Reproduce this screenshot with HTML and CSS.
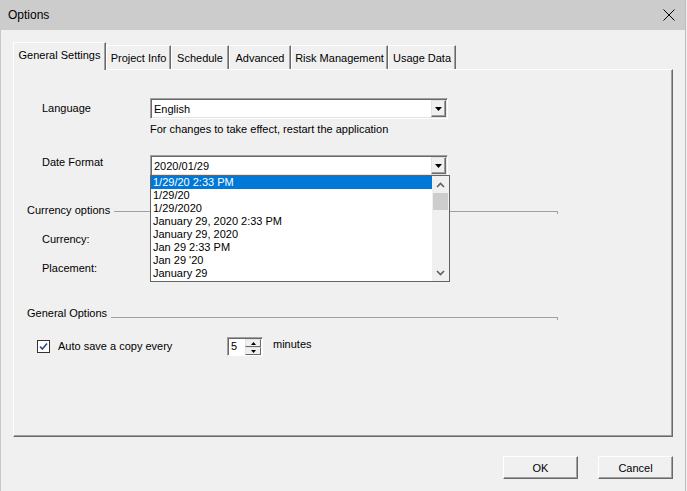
FILE: index.html
```html
<!DOCTYPE html>
<html>
<head>
<meta charset="utf-8">
<title>Options</title>
<link rel="stylesheet" href="styles.css">
</head>
<body>
<div class="window">
  <div class="titlebar">
    <span class="title">Options</span>
    <svg class="close" width="12" height="12" viewBox="0 0 12 12"><path d="M0.5 0.5 L11.5 11.5 M11.5 0.5 L0.5 11.5" stroke="#000" stroke-width="1" fill="none"/></svg>
  </div>
  <div class="client">
    <div class="tabs">
      <div class="tab tab-active tab-gs">General Settings</div>
      <div class="tab tab-pi">Project Info</div>
      <div class="tab tab-sch">Schedule</div>
      <div class="tab tab-adv">Advanced</div>
      <div class="tab tab-risk">Risk Management</div>
      <div class="tab tab-usage">Usage Data</div>
    </div>
    <div class="panel">
      <div class="field field-lang">
        <span class="label">Language</span>
        <div class="combo">
          <span class="combo-value">English</span>
          <span class="combo-btn"><svg width="7" height="4" viewBox="0 0 7 4"><path d="M0 0 H7 L3.5 4 Z" fill="#000"/></svg></span>
        </div>
      </div>
      <div class="hint">For changes to take effect, restart the application</div>
      <div class="field field-date">
        <span class="label">Date Format</span>
        <div class="combo">
          <span class="combo-value">2020/01/29</span>
          <span class="combo-btn"><svg width="7" height="4" viewBox="0 0 7 4"><path d="M0 0 H7 L3.5 4 Z" fill="#000"/></svg></span>
          <div class="dropdown">
            <div class="options">
              <div class="option option-selected">1/29/20 2:33 PM</div>
              <div class="option">1/29/20</div>
              <div class="option">1/29/2020</div>
              <div class="option">January 29, 2020 2:33 PM</div>
              <div class="option">January 29, 2020</div>
              <div class="option">Jan 29 2:33 PM</div>
              <div class="option">Jan 29 '20</div>
              <div class="option">January 29</div>
            </div>
            <div class="scrollbar">
              <div class="sb-arrow"><svg width="9" height="6" viewBox="0 0 9 6"><path d="M1 5 L4.5 1.5 L8 5" stroke="#606060" stroke-width="1.6" fill="none"/></svg></div>
              <div class="sb-thumb"></div>
              <div class="sb-track"></div>
              <div class="sb-arrow"><svg width="9" height="6" viewBox="0 0 9 6"><path d="M1 1 L4.5 4.5 L8 1" stroke="#606060" stroke-width="1.6" fill="none"/></svg></div>
            </div>
          </div>
        </div>
      </div>
      <div class="group group-currency">
        <span class="group-title">Currency options</span>
        <span class="group-line"></span>
      </div>
      <div class="field field-plain"><span class="label">Currency:</span></div>
      <div class="field field-plain"><span class="label">Placement:</span></div>
      <div class="group group-general">
        <span class="group-title">General Options</span>
        <span class="group-line"></span>
      </div>
      <div class="check-row">
        <span class="checkbox"><svg width="11" height="11" viewBox="0 0 11 11"><path d="M2 5.5 L4.3 8 L9 2.5" stroke="#2d4f80" stroke-width="1.6" fill="none"/></svg></span>
        <span class="check-label">Auto save a copy every</span>
        <div class="spin">
          <span class="spin-value">5</span>
          <div class="spin-btns">
            <span class="spin-btn"><svg width="5" height="3" viewBox="0 0 5 3"><path d="M0 3 H5 L2.5 0 Z" fill="#000"/></svg></span>
            <span class="spin-btn"><svg width="5" height="3" viewBox="0 0 5 3"><path d="M0 0 H5 L2.5 3 Z" fill="#000"/></svg></span>
          </div>
        </div>
        <span class="minutes">minutes</span>
      </div>
    </div>
    <div class="footer">
      <button class="btn">OK</button>
      <button class="btn">Cancel</button>
    </div>
  </div>
</div>
</body>
</html>
```
FILE: styles.css
```css
html, body {
  margin: 0;
  padding: 0;
  background: #f0f0f0;
}
body {
  font-family: "Liberation Sans", Arial, sans-serif;
  font-size: 11px;
  color: #000;
}
.window {
  width: 686px;
  height: 491px;
  box-sizing: border-box;
  display: flex;
  flex-direction: column;
  border-left: 1px solid #c8c8c8;
  border-right: 1px solid #bcbcbc;
  background: #f0f0f0;
}
.titlebar {
  height: 30px;
  flex: none;
  background: #cccccc;
  display: flex;
  align-items: center;
  justify-content: space-between;
  padding: 0 10px 0 8px;
  margin-left: -1px;
}
.title {
  font-size: 12px;
}
.close {
  display: block;
}
.client {
  flex: 1;
  padding: 12px 12px 0 12px;
}
.tabs {
  display: flex;
  align-items: flex-end;
  height: 27px;
}
.tab {
  height: 24px;
  box-sizing: border-box;
  border: 1px solid;
  border-color: #fff #696969 transparent #fff;
  border-bottom: none;
  box-shadow: inset -1px 0 #a0a0a0;
  padding-top: 6px;
  line-height: 13px;
  text-align: center;
  white-space: nowrap;
}
.tab-active {
  height: 28px;
  margin-bottom: -1px;
  padding-top: 6px;
  position: relative;
  z-index: 1;
  background: #f0f0f0;
}
.tab-gs { width: 93px; }
.tab-pi { width: 65px; }
.tab-sch { width: 58px; }
.tab-adv { width: 62px; }
.tab-risk { width: 97px; }
.tab-usage { width: 68px; }

.panel {
  height: 368px;
  box-sizing: border-box;
  border: 1px solid;
  border-color: #fff #696969 #696969 #fff;
  box-shadow: inset -1px -1px #a0a0a0;
  padding-left: 13px;
}
.field {
  display: flex;
  padding-left: 15px;
}
.label {
  width: 108px;
  flex: none;
  line-height: 13px;
}
.field-lang {
  margin-top: 28px;
}
.field-lang .label {
  margin-top: 4px;
}
.field-date {
  margin-top: 19px;
}
.field-date .label {
  margin-top: 1px;
}
.field-plain {
  margin-top: 16px;
}
.combo {
  width: 298px;
  height: 21px;
  box-sizing: border-box;
  position: relative;
  border: 1px solid;
  border-color: #a0a0a0 #fff #fff #a0a0a0;
  box-shadow: inset 1px 1px #696969, inset -1px -1px #e3e3e3;
  background: #fff;
  display: flex;
  align-items: center;
}
.combo-value {
  flex: 1;
  padding-left: 3px;
  padding-top: 1px;
  line-height: 13px;
}
.combo-btn {
  width: 15px;
  height: 17px;
  margin-right: 1px;
  box-sizing: border-box;
  border: 1px solid;
  border-color: #e3e3e3 #696969 #696969 #e3e3e3;
  box-shadow: inset -1px -1px #a0a0a0;
  background: #f0f0f0;
  display: flex;
  align-items: center;
  justify-content: center;
}
.combo-btn svg {
  display: block;
}
.hint {
  margin: 4px 0 0 123px;
  line-height: 13px;
}
.dropdown {
  position: absolute;
  top: 19px;
  left: -1px;
  width: 300px;
  height: 107px;
  box-sizing: border-box;
  border: 1px solid #646464;
  background: #fff;
  display: flex;
  z-index: 2;
}
.options {
  flex: 1;
}
.option {
  height: 13px;
  line-height: 13px;
  padding-left: 2px;
  white-space: nowrap;
}
.option-selected {
  background: #0078d7;
  color: #fff;
}
.scrollbar {
  width: 17px;
  background: #f0f0f0;
  display: flex;
  flex-direction: column;
}
.sb-arrow {
  height: 17px;
  display: flex;
  align-items: center;
  justify-content: center;
}
.sb-arrow svg {
  display: block;
}
.sb-thumb {
  height: 17px;
  margin: 0 1px;
  background: #cdcdcd;
}
.sb-track {
  flex: 1;
}
.group {
  display: flex;
  width: 531px;
  align-items: flex-start;
}
.group-currency {
  margin-top: 28px;
}
.group-general {
  margin-top: 32px;
}
.group-title {
  line-height: 13px;
}
.group-line {
  flex: 1;
  height: 2px;
  margin-left: 4px;
  border-top: 1px solid #a0a0a0;
  border-right: 1px solid #a0a0a0;
}
.group-currency .group-line {
  margin-top: 7px;
}
.group-general .group-line {
  margin-top: 10px;
}
.check-row {
  display: flex;
  align-items: center;
  height: 19px;
  margin-top: 17px;
  padding-left: 10px;
}
.checkbox {
  width: 13px;
  height: 13px;
  box-sizing: border-box;
  border: 1px solid #333;
  background: #fff;
  display: flex;
  align-items: center;
  justify-content: center;
  margin-right: 8px;
}
.checkbox svg {
  display: block;
}
.check-label {
  width: 169px;
  line-height: 13px;
}
.spin {
  width: 36px;
  height: 19px;
  box-sizing: border-box;
  border: 1px solid;
  border-color: #a0a0a0 #fff #fff #a0a0a0;
  box-shadow: inset 1px 1px #696969;
  background: #fff;
  display: flex;
}
.spin-value {
  flex: 1;
  padding-left: 3px;
  line-height: 17px;
}
.spin-btns {
  width: 16px;
  display: flex;
  flex-direction: column;
  padding: 1px 1px 0 0;
}
.spin-btn {
  flex: 1;
  box-sizing: border-box;
  border: 1px solid;
  border-color: #e3e3e3 #696969 #696969 #e3e3e3;
  background: #f0f0f0;
  display: flex;
  align-items: center;
  justify-content: center;
}
.spin-btn svg {
  display: block;
}
.minutes {
  align-self: flex-start;
  margin: 1px 0 0 10px;
  line-height: 13px;
}
.footer {
  display: flex;
  justify-content: flex-end;
  gap: 20px;
  margin-top: 19px;
}
.btn {
  width: 75px;
  height: 23px;
  box-sizing: border-box;
  border: 1px solid;
  border-color: #fff #696969 #696969 #fff;
  box-shadow: inset -1px -1px #a0a0a0;
  background: #f0f0f0;
  font-family: "Liberation Sans", Arial, sans-serif;
  font-size: 11px;
  color: #000;
  padding: 0;
}
```
